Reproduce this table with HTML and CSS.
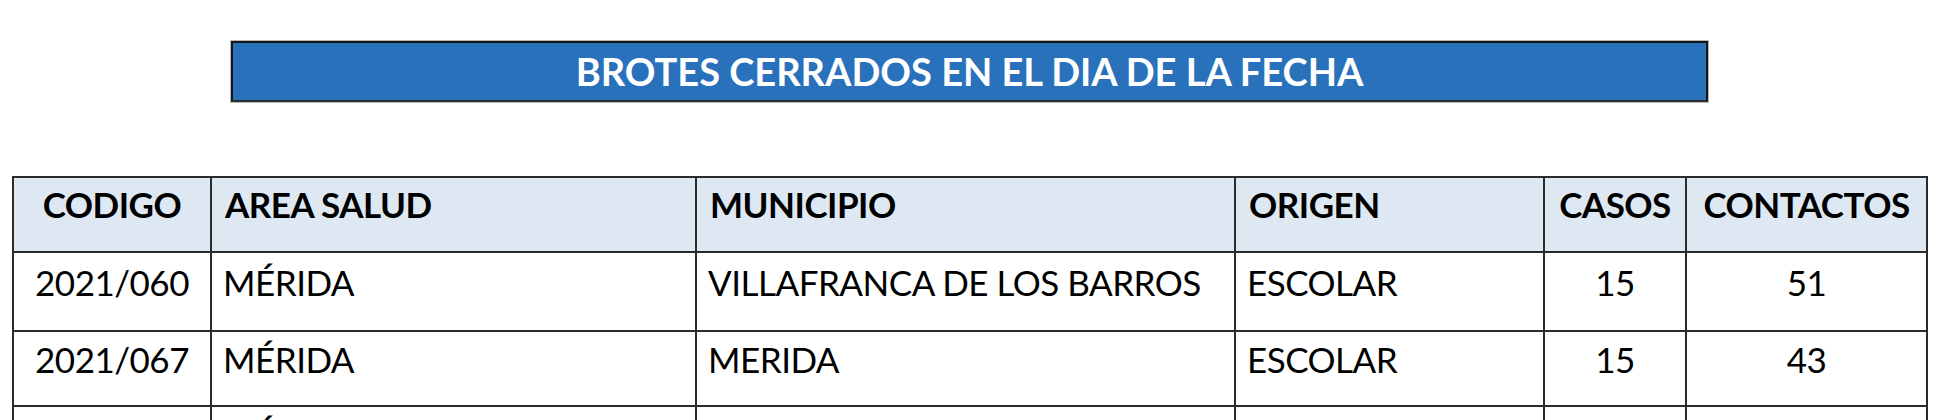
FILE: index.html
```html
<!DOCTYPE html>
<html lang="es">
<head>
<meta charset="utf-8">
<title>Brotes cerrados</title>
<link rel="stylesheet" href="styles.css">
</head>
<body>
<div class="page">
  <div class="title">BROTES CERRADOS EN EL DIA DE LA FECHA</div>
  <table class="brotes">
    <colgroup>
      <col class="w-cod">
      <col class="w-area">
      <col class="w-mun">
      <col class="w-ori">
      <col class="w-cas">
      <col class="w-con">
    </colgroup>
    <thead>
      <tr>
        <th class="center">CODIGO</th>
        <th>AREA SALUD</th>
        <th>MUNICIPIO</th>
        <th>ORIGEN</th>
        <th class="center">CASOS</th>
        <th class="center">CONTACTOS</th>
      </tr>
    </thead>
    <tbody>
      <tr class="r1">
        <td class="center">2021/060</td>
        <td>MÉRIDA</td>
        <td>VILLAFRANCA DE LOS BARROS</td>
        <td>ESCOLAR</td>
        <td class="center">15</td>
        <td class="center">51</td>
      </tr>
      <tr class="r2">
        <td class="center">2021/067</td>
        <td>MÉRIDA</td>
        <td>MERIDA</td>
        <td>ESCOLAR</td>
        <td class="center">15</td>
        <td class="center">43</td>
      </tr>
      <tr class="r3">
        <td class="center"></td>
        <td>MÉRIDA</td>
        <td></td>
        <td></td>
        <td class="center"></td>
        <td class="center"></td>
      </tr>
    </tbody>
  </table>
</div>
</body>
</html>
```

FILE: styles.css
```css
html, body {
  margin: 0;
  padding: 0;
  background: #ffffff;
}

body {
  font-family: Lato, "Open Sans", "Liberation Sans", sans-serif;
  color: #000000;
  overflow: hidden;
}

.page {
  padding-top: 41px;
}

.title {
  box-sizing: border-box;
  margin-left: 231px;
  width: 1477px;
  height: 61px;
  background: #2971bb;
  border: 2px solid #151515;
  border-bottom-color: #2a2f36;
  box-shadow: 0 0 0 1px #b8b8b8;
  color: #ffffff;
  font-weight: 700;
  font-size: 38px;
  line-height: 57px;
  text-align: center;
}

.brotes {
  margin-top: 74px;
  margin-left: 12px;
  width: 1914px;
  table-layout: fixed;
  border-collapse: collapse;
}

.w-cod { width: 198px; }
.w-area { width: 485px; }
.w-mun { width: 539px; }
.w-ori { width: 309px; }
.w-cas { width: 142px; }
.w-con { width: 241px; }

.brotes th,
.brotes td {
  border: 2px solid #2b2b2b;
  text-align: left;
  vertical-align: top;
  font-size: 35px;
  line-height: 40px;
  letter-spacing: -0.5px;
  white-space: nowrap;
  overflow: hidden;
}

.brotes th {
  background: #dee8f3;
  font-weight: 700;
  padding: 6px 0 0 13px;
}

.brotes thead tr {
  height: 75px;
}

.brotes td {
  font-weight: 400;
  padding: 9px 0 0 11px;
}

.brotes .r1 { height: 79px; }
.brotes .r2 { height: 75px; }
.brotes .r3 { height: 75px; }

.brotes .r2 td,
.brotes .r3 td {
  padding-top: 7px;
}

.brotes .center {
  text-align: center;
  padding-left: 0;
}
```
